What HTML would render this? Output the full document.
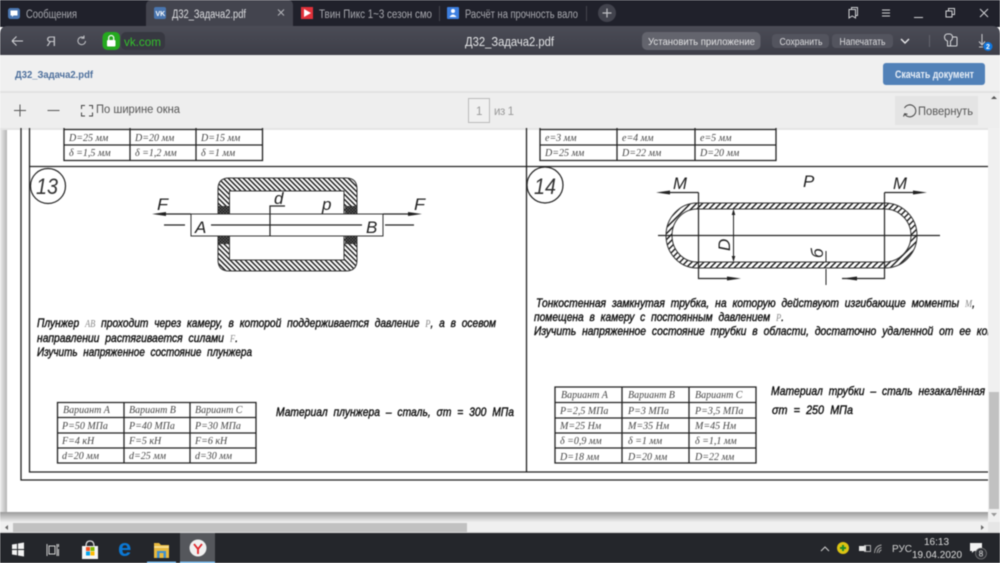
<!DOCTYPE html>
<html lang="ru"><head><meta charset="utf-8"><title>Д32_Задача2.pdf</title>
<style>
html,body{margin:0;padding:0;width:1000px;height:563px;overflow:hidden;background:#fff}
svg{display:block;filter:blur(.4px)}
text{font-family:"Liberation Sans",sans-serif}
.t{font-size:12px;font-style:italic;font-weight:normal;fill:#111;stroke:#111;stroke-width:.4;word-spacing:3.5px}
.t tspan{font-family:"Liberation Serif",serif;fill:#888;stroke:none;font-size:10px}
.c{font-family:"Liberation Serif",serif;font-size:10px;font-style:italic;fill:#444;stroke:none}
.l{font-size:17px;font-style:italic;fill:#222;stroke:none}
.g{fill:none;stroke:#222;stroke-width:1.2}
.tb{fill:none;stroke:#222;stroke-width:1.3}
</style></head><body>
<svg width="1000" height="563" viewBox="0 0 1000 563" xmlns="http://www.w3.org/2000/svg">
<defs>
<linearGradient id="tool" x1="0" y1="0" x2="0" y2="1"><stop offset="0" stop-color="#4b4c56"/><stop offset="1" stop-color="#3d3e48"/></linearGradient>
<linearGradient id="sh" x1="0" y1="0" x2="0" y2="1"><stop offset="0" stop-color="#9a9a9a"/><stop offset="1" stop-color="#eeeeee"/></linearGradient>
<linearGradient id="shl" x1="0" y1="0" x2="1" y2="0"><stop offset="0" stop-color="#eeeeee"/><stop offset="1" stop-color="#b5b5b5"/></linearGradient>
<pattern id="h" width="5" height="5" patternUnits="userSpaceOnUse"><rect width="5" height="5" fill="#fff"/><path d="M-1 -1L6 6M-1 4L1 6M4 -1L6 1" stroke="#222" stroke-width="1.500"/></pattern>
<pattern id="h2" width="6" height="6" patternUnits="userSpaceOnUse"><rect width="6" height="6" fill="#fff"/><path d="M-1 7L7 -1M-1 1L1 -1M5 7L7 5" stroke="#222" stroke-width="1.500"/></pattern>
<pattern id="d" width="3" height="3" patternUnits="userSpaceOnUse"><rect width="3" height="3" fill="#666"/><path d="M0 0L3 3M0 3L3 0" stroke="#222" stroke-width=".8"/></pattern>
<clipPath id="doc"><rect x="0" y="128" width="988" height="384"/></clipPath>
</defs>

<!-- tab strip -->
<rect width="1000" height="27" fill="#20212b"/>
<path d="M146 27V6q0-6 6-6H288q5 0 5 6V27z" fill="#43444e"/>
<rect x="8" y="8" width="12" height="11" rx="2.5" fill="#4a76b0"/><path d="M10.500 10.500h7v5h-4l-1.500 1.500v-1.500h-1.500z" fill="#fff"/>
<text x="26" y="18" font-size="11.500" fill="#a9aab0" textLength="51" lengthAdjust="spacingAndGlyphs">Сообщения</text>
<rect x="154" y="7" width="12" height="12" rx="2" fill="#4a76b0"/><text x="155.500" y="16" font-size="7" font-weight="bold" fill="#fff">VK</text>
<text x="172" y="18" font-size="11.500" fill="#dedfe2" textLength="74" lengthAdjust="spacingAndGlyphs">Д32_Задача2.pdf</text>
<path d="M278 9.500l6 6M284 9.500l-6 6" stroke="#b4b5ba" stroke-width="1"/>
<rect x="301" y="7" width="12" height="12" fill="#e0313a"/><path d="M304 9l7 4-7 4z" fill="#fff"/>
<text x="319" y="18" font-size="11.500" fill="#a9aab0" textLength="113" lengthAdjust="spacingAndGlyphs">Твин Пикс 1~3 сезон смо</text>
<rect x="439" y="6" width="1" height="15" fill="#44454e"/>
<rect x="447" y="7" width="12" height="12" rx="1" fill="#3d7fe0"/><circle cx="453" cy="11" r="2" fill="#fff"/><path d="M449.500 17q3.500-5 7 0z" fill="#fff"/>
<text x="465" y="18" font-size="11.500" fill="#a9aab0" textLength="113" lengthAdjust="spacingAndGlyphs">Расчёт на прочность вало</text>
<rect x="586" y="6" width="1" height="15" fill="#44454e"/>
<circle cx="607" cy="13" r="9" fill="#42434d"/><path d="M607 8.500v9M602.500 13h9" stroke="#bfc0c4" stroke-width="1.200"/>
<g fill="none" stroke="#d0d1d4" stroke-width="1">
<path d="M849 9.500h6.500v8.500l-3.300-2-3.200 2zM851.500 9.500v-2h6v8h-2"/>
<path d="M882 10h8M882 13h8M882 16h8"/>
<path d="M914 17.500h9"/>
<path d="M946 11h6v6h-6zM948.500 11v-2.500h6v6h-2.500"/>
<path d="M980 9l8 8M988 9l-8 8"/>
</g>

<!-- address bar -->
<path d="M0 55V34q0-8 8-8H992q8 0 8 8V55z" fill="url(#tool)"/>
<path d="M12 41h11M12 41l4.500-4.500M12 41l4.500 4.500" fill="none" stroke="#d4d5d8" stroke-width="1"/>
<text x="46" y="46" font-size="14" fill="#c3c4c8">Я</text>
<path d="M85.500 41a3.800 3.800 0 1 1-1.500-3.200M84 35.500v2.800h-2.800" fill="none" stroke="#c3c4c8" stroke-width="1"/>
<rect x="121" y="32" width="44" height="18" rx="5" fill="#373841"/>
<rect x="102.500" y="32" width="17.500" height="18" rx="5" fill="#25a91f"/>
<rect x="107" y="40" width="8.500" height="6.500" rx="1" fill="#fff"/><path d="M108.700 40v-2a2.500 2.500 0 0 1 5 0v2" fill="none" stroke="#fff" stroke-width="1.200"/>
<text x="124" y="46" font-size="12" fill="#33c02c" textLength="37" lengthAdjust="spacingAndGlyphs">vk.com</text>
<text x="465" y="46" font-size="12.500" fill="#e2e3e5" textLength="89" lengthAdjust="spacingAndGlyphs">Д32_Задача2.pdf</text>
<rect x="642" y="32" width="118.500" height="18" rx="5" fill="#63646d"/>
<text x="648" y="45" font-size="10.500" fill="#e2e2e4" textLength="107" lengthAdjust="spacingAndGlyphs">Установить приложение</text>
<rect x="772" y="34" width="57" height="14" rx="4" fill="#53545e"/>
<text x="779.500" y="45" font-size="10" fill="#dcdcdf" textLength="43" lengthAdjust="spacingAndGlyphs">Сохранить</text>
<rect x="832" y="34" width="61" height="14" rx="4" fill="#53545e"/>
<text x="839.500" y="45" font-size="10" fill="#dcdcdf" textLength="46" lengthAdjust="spacingAndGlyphs">Напечатать</text>
<path d="M901 39l4 4 4-4" fill="none" stroke="#e8e8ea" stroke-width="1.400"/>
<rect x="929" y="35" width="1" height="12" fill="#63646d"/>
<path d="M944.500 37a3 3 0 0 1 3-3h2a3 3 0 0 1 3 3q0 3-2 4v5h-3v-5q-3-1-3-4zM952 37h4q1 0 1 1v7q0 1-1 1h-6" fill="none" stroke="#d8d9dc" stroke-width="1"/>
<path d="M982 34v11M979 41.500l3 3.500 3-3.500M979 47h4" fill="none" stroke="#c8c9cc" stroke-width="1"/>
<circle cx="988" cy="46.500" r="4.500" fill="#0f77e0"/><text x="988" y="49" font-size="7" font-weight="bold" fill="#fff" text-anchor="middle">2</text>

<!-- vk header -->
<rect y="55" width="1000" height="37" fill="#f0f0f0"/>
<text x="15" y="78" font-size="10.500" font-weight="bold" fill="#4d6f9c" textLength="78" lengthAdjust="spacingAndGlyphs">Д32_Задача2.pdf</text>
<rect x="883" y="63" width="102" height="22" rx="3" fill="#5181b8"/>
<text x="895" y="78" font-size="11" font-weight="bold" fill="#e8eef6" textLength="79" lengthAdjust="spacingAndGlyphs">Скачать документ</text>

<!-- pdf toolbar -->
<rect y="92" width="1000" height="36" fill="#eeeeee"/>
<rect y="91" width="1000" height="2" fill="#e2e2e2"/>
<path d="M14 110.500h12M20 104.500v12M47.500 110.500h12" stroke="#555" stroke-width="1"/>
<path d="M85 105.500h-3.500v3.500M89 105.500h3.500v3.500M81.500 112.500v3.500h3.500M92.500 112.500v3.500h-3.500" fill="none" stroke="#444" stroke-width="1"/>
<text x="96" y="113" font-size="11.500" fill="#555" textLength="84" lengthAdjust="spacingAndGlyphs">По ширине окна</text>
<rect x="468.500" y="98.500" width="21" height="24" fill="#f0f0f0" stroke="#bbb"/>
<text x="476" y="115" font-size="11.500" fill="#999">1</text>
<text x="494" y="115" font-size="11.500" fill="#999" textLength="20">из 1</text>
<rect x="895" y="96" width="83" height="29" fill="#e4e4e4"/>
<path d="M904.500 108a6 6 0 1 1 .2 6M903.500 116.500l1.200-2.800 2.800.6" fill="none" stroke="#444" stroke-width="1"/>
<text x="918" y="115" font-size="11.500" fill="#555" textLength="55" lengthAdjust="spacingAndGlyphs">Повернуть</text>
<path d="M991 99l3-3 3 3z" fill="#555"/>

<!-- viewer -->
<rect y="128" width="1000" height="394" fill="#eeeeee"/>
<rect x="0" y="128" width="7" height="384" fill="url(#shl)"/>
<rect x="7" y="128" width="981" height="384" fill="#fff"/>
<rect y="128" width="988" height="2" fill="#e4e4e4"/>
<rect y="512" width="988" height="10" fill="url(#sh)"/>
<rect x="988" y="128" width="12" height="394" fill="#f0f0f0"/>
<rect x="989" y="392" width="10" height="117" fill="#c1c1c1"/>
<path d="M991 513h6l-3 3.500z" fill="#999"/>
<rect y="522" width="988" height="10" fill="#f0f0f0"/>
<rect x="988" y="522" width="12" height="10" fill="#e6e6e6"/>
<rect x="13" y="523" width="454" height="9" fill="#c1c1c1"/>
<path d="M8 525v5l-3-2.500zM981 525v5l3-2.500z" fill="#666"/>
<rect y="532" width="1000" height="1" fill="#d8d8d8"/>

<g clip-path="url(#doc)">
<!-- frame -->
<path d="M21 128V480H988M29.500 128V472H988M29.500 166.500H988M526.500 128V472" fill="none" stroke="#222" stroke-width="1.300"/>

<!-- top tables -->
<path class="tb" d="M64 128V160.500H262.500V128M64 145H262.500M64 129.500H262.500M130 128V160.500M196 128V160.500"/>
<path class="tb" d="M540 128V160.500H776V128M540 145H776M540 129.500H776M617 128V160.500M695 128V160.500"/>
<text class="c" x="69" y="141">D=25 мм</text><text class="c" x="135" y="141">D=20 мм</text><text class="c" x="201" y="141">D=15 мм</text>
<text class="c" x="69" y="156">δ =1,5 мм</text><text class="c" x="135" y="156">δ =1,2 мм</text><text class="c" x="201" y="156">δ =1 мм</text>
<text class="c" x="545" y="141">e=3 мм</text><text class="c" x="622" y="141">e=4 мм</text><text class="c" x="700" y="141">e=5 мм</text>
<text class="c" x="545" y="156">D=25 мм</text><text class="c" x="622" y="156">D=22 мм</text><text class="c" x="700" y="156">D=20 мм</text>

<!-- 13 -->
<circle cx="48" cy="186" r="17.500" fill="none" stroke="#222" stroke-width="1.200"/>
<text x="36" y="194" font-size="22" font-style="italic" fill="#333" textLength="22" lengthAdjust="spacingAndGlyphs">13</text>
<path d="M229 178H346q11 0 11 11V260q0 11-11 11H229q-11 0-11-11V189q0-11 11-11zM229.500 191V260H344V191z" fill="url(#h)" fill-rule="evenodd" stroke="#333" stroke-width="1"/>
<rect x="218" y="206" width="11" height="8" fill="url(#d)"/><rect x="345" y="206" width="12" height="8" fill="url(#d)"/>
<rect x="218" y="236" width="11" height="8" fill="url(#d)"/><rect x="345" y="236" width="12" height="8" fill="url(#d)"/>
<rect x="191" y="214" width="192" height="22" fill="#fff" stroke="#333" stroke-width="1"/>
<path class="g" d="M164 225H185M211 225H362M385 225H414"/>
<path class="g" d="M160 214H191M383 214H415"/>
<path d="M152 214l14-2v4zM422 214l-14-2v4z" fill="#222"/>
<path class="g" d="M270 236V206H285"/>
<text class="l" x="157" y="210" textLength="11" lengthAdjust="spacingAndGlyphs">F</text>
<text class="l" x="414" y="210" textLength="11" lengthAdjust="spacingAndGlyphs">F</text>
<text class="l" x="195" y="233">A</text><text class="l" x="366" y="233">B</text>
<text class="l" x="274" y="204" font-size="18">d</text><text class="l" x="322" y="210" font-size="18">p</text>

<!-- 14 -->
<circle cx="545" cy="185" r="18" fill="none" stroke="#222" stroke-width="1.200"/>
<text x="534" y="194" font-size="22" font-style="italic" fill="#333" textLength="22" lengthAdjust="spacingAndGlyphs">14</text>
<path d="M697 203H885A32 32.500 0 0 1 885 268H697A31 32.500 0 0 1 697 203ZM697 209A25 26.500 0 0 0 697 262H885A26 26.500 0 0 0 885 209Z" fill="url(#h2)" fill-rule="evenodd" stroke="#333" stroke-width="1"/>
<path class="g" d="M658 235.500H940M698.500 192.500V278.500H732M884.500 192.500V278.500H842M698.500 192.500H664M884.500 192.500H918"/>
<path d="M656 192.500l14-2v4zM927 192.500l-14-2v4zM741 278.500l-14-2v4zM843 278.500l14-2v4z" fill="#222"/>
<path d="M733.500 210V261" stroke="#222" stroke-width="1"/><path d="M733.500 209l-1.800 6h3.600zM733.500 262l-1.800-6h3.600z" fill="#222"/>
<path d="M826 251V262M826 269V285" stroke="#222" stroke-width="1"/>
<text class="l" x="673" y="189" textLength="14" lengthAdjust="spacingAndGlyphs">M</text>
<text class="l" x="893" y="189" textLength="14" lengthAdjust="spacingAndGlyphs">M</text>
<text class="l" x="803" y="187">P</text>
<text class="l" transform="translate(730 251) rotate(-90)" x="0" y="0" font-size="16">D</text>
<text class="l" transform="translate(823 258) rotate(-90)" x="0" y="0" font-size="15">б</text>

<!-- paragraphs -->
<text class="t" x="37" y="327" textLength="459" lengthAdjust="spacingAndGlyphs">Плунжер <tspan>AB</tspan>  проходит через камеру, в которой поддерживается давление <tspan>P</tspan>, а в осевом</text>
<text class="t" x="37" y="342" textLength="201" lengthAdjust="spacingAndGlyphs">направлении растягивается силами <tspan>F</tspan>.</text>
<text class="t" x="37" y="356" textLength="215" lengthAdjust="spacingAndGlyphs">Изучить напряженное состояние плунжера</text>
<text class="t" x="536" y="307" textLength="439" lengthAdjust="spacingAndGlyphs">Тонкостенная замкнутая трубка, на которую действуют изгибающие моменты <tspan>M</tspan>,</text>
<text class="t" x="534" y="321" textLength="250" lengthAdjust="spacingAndGlyphs">помещена в камеру с постоянным давлением <tspan>P</tspan>.</text>
<text class="t" x="534" y="335" textLength="465" lengthAdjust="spacingAndGlyphs">Изучить напряженное состояние трубки в области, достаточно удаленной от ее конц</text>

<!-- table 13 -->
<path class="tb" d="M57.500 402.500H256V463H57.500ZM57.500 417.500H256M57.500 433H256M57.500 448H256M124 402.500V463M190 402.500V463"/>
<text class="c" x="63" y="413">Вариант A</text><text class="c" x="129" y="413">Вариант B</text><text class="c" x="195" y="413">Вариант C</text>
<text class="c" x="62" y="429">P=50 МПа</text><text class="c" x="129" y="429">P=40 МПа</text><text class="c" x="195" y="429">P=30 МПа</text>
<text class="c" x="62" y="444">F=4 кН</text><text class="c" x="129" y="444">F=5 кН</text><text class="c" x="195" y="444">F=6 кН</text>
<text class="c" x="62" y="459">d=20 мм</text><text class="c" x="129" y="459">d=25 мм</text><text class="c" x="195" y="459">d=30 мм</text>

<!-- table 14 -->
<path class="tb" d="M555 387H756V463H555ZM555 402.500H756M555 418H756M555 433H756M555 448H756M622 387V463M689 387V463"/>
<text class="c" x="561" y="398">Вариант A</text><text class="c" x="628" y="398">Вариант B</text><text class="c" x="695" y="398">Вариант C</text>
<text class="c" x="560" y="414">P=2,5 МПа</text><text class="c" x="628" y="414">P=3 МПа</text><text class="c" x="695" y="414">P=3,5 МПа</text>
<text class="c" x="560" y="429">M=25 Нм</text><text class="c" x="628" y="429">M=35 Нм</text><text class="c" x="695" y="429">M=45 Нм</text>
<text class="c" x="560" y="444">δ =0,9 мм</text><text class="c" x="628" y="444">δ =1 мм</text><text class="c" x="695" y="444">δ =1,1 мм</text>
<text class="c" x="560" y="460">D=18 мм</text><text class="c" x="628" y="460">D=20 мм</text><text class="c" x="695" y="460">D=22 мм</text>

<!-- material -->
<text class="t" x="276" y="416" textLength="238" lengthAdjust="spacingAndGlyphs">Материал плунжера – сталь, σт = 300 МПа</text>
<text class="t" x="771" y="395" textLength="214" lengthAdjust="spacingAndGlyphs">Материал трубки – сталь незакалённая</text>
<text class="t" x="772" y="414" textLength="81" lengthAdjust="spacingAndGlyphs">σт = 250 МПа</text>
</g>

<!-- taskbar -->
<rect y="533" width="1000" height="30" fill="#24262b"/>
<path d="M12 544.500l5-.8v5.300h-5zM18 543.500l6-1v6.500h-6zM12 550h5v5.300l-5-.8zM18 550h6v6.500l-6-1z" fill="#f2f2f2"/>
<path d="M47 544v12M57 544v12M49 546h6v8h-6z" fill="none" stroke="#cfcfcf" stroke-width="1"/>
<path d="M58.500 544v3M58.500 549v7" stroke="#cfcfcf"/>
<path d="M82 546h16v13H82z" fill="#f5f5f5"/><path d="M86 546q0-5 4-5t4 5" fill="none" stroke="#ddd" stroke-width="1.200"/>
<rect x="86" y="547" width="4" height="4" fill="#f25022"/><rect x="90.500" y="547" width="4" height="4" fill="#7fba00"/><rect x="86" y="551.500" width="4" height="4" fill="#00a4ef"/><rect x="90.500" y="551.500" width="4" height="4" fill="#ffb900"/>
<text x="118" y="556" font-size="24" font-weight="bold" fill="#0b78d4">e</text>
<path d="M154 543h5l2 2h8v13h-15z" fill="#e8b93e"/><rect x="154" y="546" width="15" height="2" fill="#f8dd8a"/><rect x="157" y="551" width="9" height="7" fill="#3c8fd0"/><rect x="159.500" y="553" width="4" height="5" fill="#e8b93e"/>
<rect x="147" y="561.500" width="29" height="1.500" fill="#76b9ed"/>
<rect x="180" y="533" width="35" height="30" fill="#55575c"/>
<rect x="180" y="561.500" width="35" height="1.500" fill="#76b9ed"/>
<circle cx="198" cy="548" r="8.500" fill="#f0f0f0"/><path d="M194 544l4 5 4-5M198 549v5" fill="none" stroke="#e0262b" stroke-width="1.800"/>
<path d="M821 551l4-4 4 4" fill="none" stroke="#cfcfcf" stroke-width="1"/>
<circle cx="843" cy="548" r="6" fill="#dcc413"/><path d="M840 548h6M843 545v6" stroke="#1e8a2a" stroke-width="2"/>
<rect x="859" y="546" width="7" height="5" fill="#e8e8e8"/><rect x="864.500" y="545.500" width="6" height="6" fill="none" stroke="#cfcfcf" stroke-width=".8"/>
<path d="M874.500 553q.5-7 7-8M877 553q.3-4.500 4.500-5.500M879 553q.3-2.500 2.500-3" fill="none" stroke="#a9a9a9" stroke-width=".9"/>
<text x="892" y="552" font-size="10" fill="#d5d5d5">РУС</text>
<text x="936.500" y="545" font-size="10" fill="#dcdcdc" text-anchor="middle">16:13</text>
<text x="937" y="558" font-size="10" fill="#dcdcdc" text-anchor="middle">19.04.2020</text>
<path d="M970 543h12v8h-8l-2 2v-2h-2z" fill="#f2f2f2"/><circle cx="981" cy="553.500" r="5.500" fill="#2f3136" stroke="#888" stroke-width=".6"/><text x="981" y="556.500" font-size="8" fill="#e5e5e5" text-anchor="middle">8</text>
</svg>
</body></html>
